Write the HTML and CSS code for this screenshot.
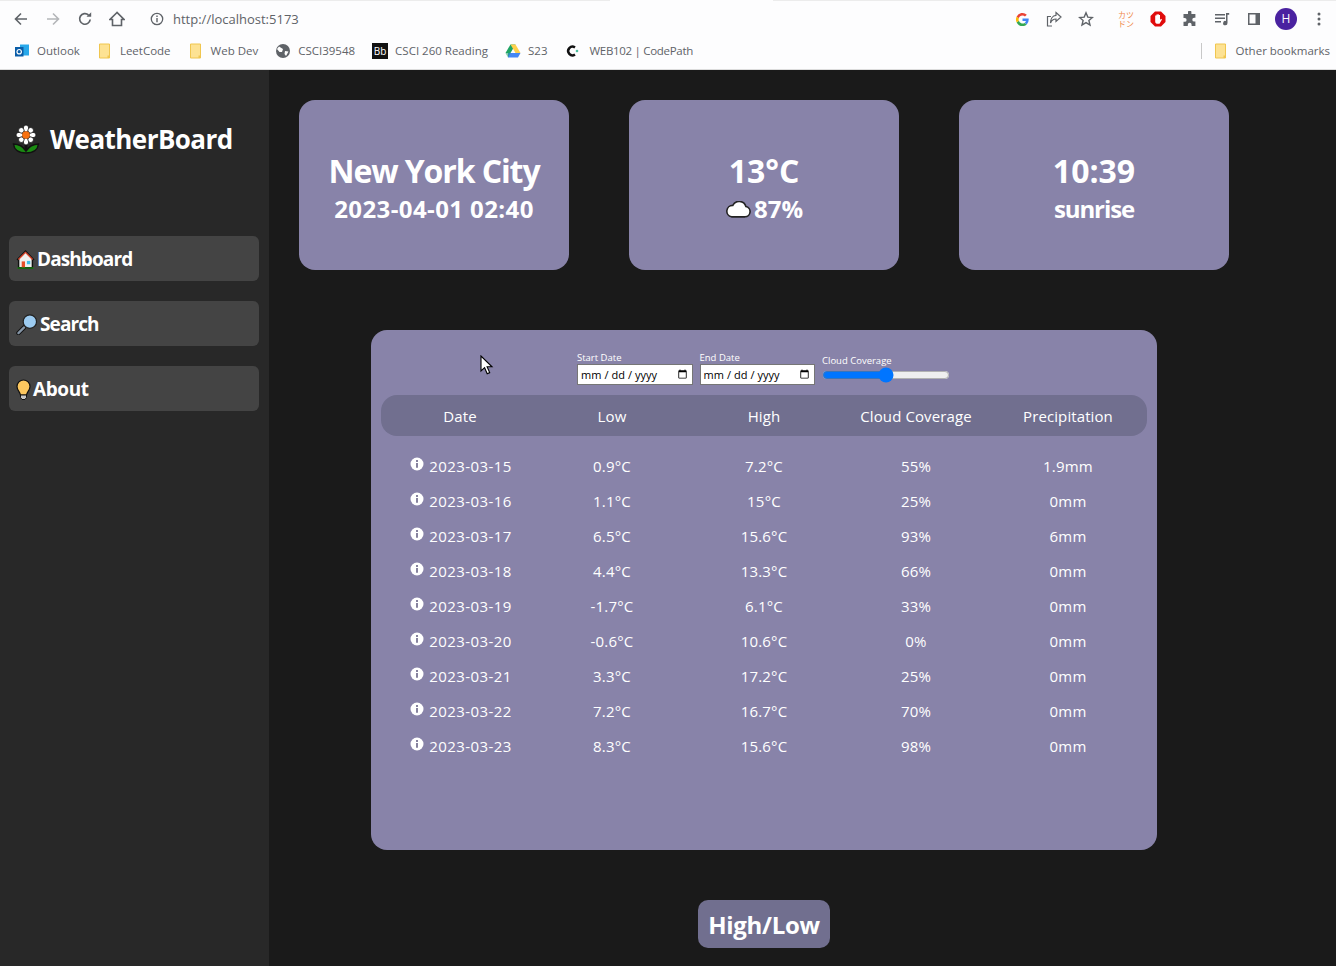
FILE: index.html
```html
<!DOCTYPE html>
<html lang="en">
<head>
  <meta charset="UTF-8">
  <meta name="viewport" content="width=device-width, initial-scale=1.0">
  <title>WeatherBoard</title>
  <link rel="stylesheet" href="styles.css">
</head>
<body>
  <header class="browser">
    <div class="toolbar">
      <svg class="tool" viewBox="0 0 16 16"><path d="M14 8H3M8 2.500 2.500 8 8 13.500" fill="none" stroke="#5f6368" stroke-width="1.600"/></svg>
      <svg class="tool" viewBox="0 0 16 16"><path d="M2 8h11M8 2.500 13.500 8 8 13.500" fill="none" stroke="#b4b6b9" stroke-width="1.600"/></svg>
      <svg class="tool" viewBox="0 0 16 16"><path d="M13.200 8.500A5.300 5.300 0 1 1 11.500 4" fill="none" stroke="#5f6368" stroke-width="1.700"/><path d="M9.500 5.800h4.700V1.200z" fill="#5f6368"/></svg>
      <svg class="tool" viewBox="0 0 16 16"><path d="M8 1.500 1 8.500h2.500v6h9v-6H15z" fill="none" stroke="#5f6368" stroke-width="1.600"/></svg>
      <svg class="tool-info" viewBox="0 0 14 14"><circle cx="7" cy="7" r="5.700" fill="none" stroke="#5f6368" stroke-width="1.300"/><path d="M6.300 6h1.400v4.200H6.300zM6.300 3.600h1.400V5H6.300z" fill="#5f6368"/></svg>
      <span class="url">http://localhost:5173</span>
      <div class="tool-right">
        <svg class="tool-g" viewBox="0 0 16 16"><path d="M14.600 8.200c0-.5 0-1-.1-1.400H8v2.700h3.700a3.200 3.200 0 0 1-1.400 2l2.200 1.700a6.600 6.600 0 0 0 2.100-5z" fill="#4285f4"/><path d="M8 15c1.800 0 3.300-.6 4.500-1.700l-2.200-1.700a4.100 4.100 0 0 1-6.200-2.200L1.800 11.100A6.800 6.800 0 0 0 8 15z" fill="#34a853"/><path d="M4.100 9.400a4.100 4.100 0 0 1 0-2.700L1.800 4.900a6.800 6.800 0 0 0 0 6.200z" fill="#fbbc05"/><path d="M8 3.700c1 0 1.900.4 2.600 1L12.600 2.800A6.800 6.800 0 0 0 1.800 4.900l2.300 1.800A4.100 4.100 0 0 1 8 3.700z" fill="#ea4335"/></svg>
        <svg class="tool-s" viewBox="0 0 16 16"><path d="M6 15H1.500V5.500H5M10 1.500 15 6l-5 4.500V8C7 8 5.500 9.500 4.500 12 4.500 8 6.500 4.500 10 4.300z" fill="none" stroke="#5f6368" stroke-width="1.200"/></svg>
        <svg class="tool-s" viewBox="0 0 16 16"><path d="m8 1.800 1.800 4.300 4.600.4-3.500 3 1.100 4.500L8 11.600 4 14l1.100-4.500-3.500-3 4.600-.4z" fill="none" stroke="#5f6368" stroke-width="1.400"/></svg>
        <span class="katakana">カツ<br>ドン</span>
        <svg class="tool-s" viewBox="0 0 16 16"><path d="M5 .5h6L15.500 5v6L11 15.500H5L.5 11V5z" fill="#e00b0b"/><path d="M5.200 8V4.500h1.200V7.500V3.500h1.200v4V3.200h1.200v4.300V4h1.200v5l1-1.200 1 .6L9.500 12.800H7C5.700 12.800 5.200 11.500 5.200 10.500z" fill="#fff"/></svg>
        <svg class="tool-s" viewBox="0 0 16 16"><path d="M6 1.200a1.700 1.700 0 0 1 3.400 0V3h4v3.800h-1.200a1.900 1.900 0 0 0 0 3.800h1.200V15H9.600v-1.300a1.900 1.900 0 0 0-3.800 0V15H1.500v-4.200h1.200a1.900 1.900 0 0 0 0-3.800H1.500V3H6z" fill="#5f6368"/></svg>
        <svg class="tool-s" viewBox="0 0 16 16"><path d="M1 3h10v1.400H1zM1 6.500h10v1.400H1zM1 10h6v1.400H1zM12 2h3.200v1.800h-1.700V12a2.200 2.200 0 1 1-1.500-2z" fill="#5f6368"/></svg>
        <svg class="tool-s" viewBox="0 0 16 16"><path d="M2 2h12v12H2zM3.500 3.500v9h6v-9z" fill="#5f6368" fill-rule="evenodd"/></svg>
        <span class="avatar">H</span>
        <svg class="tool-dots" viewBox="0 0 4 16"><circle cx="2" cy="3" r="1.500" fill="#5f6368"/><circle cx="2" cy="8" r="1.500" fill="#5f6368"/><circle cx="2" cy="13" r="1.500" fill="#5f6368"/></svg>
      </div>
    </div>
    <div class="bookmarks">
      <a class="bm"><svg viewBox="0 0 16 16"><path d="M6 1.500h9v11H6z" fill="#28a8ea"/><path d="M1 4h8.500v9.500H1z" fill="#0a5da8"/><circle cx="5.200" cy="8.700" r="2.200" fill="none" stroke="#fff" stroke-width="1.200"/></svg>Outlook</a>
      <a class="bm"><svg viewBox="0 0 16 16"><use href="#folder"/></svg>LeetCode</a>
      <a class="bm"><svg viewBox="0 0 16 16"><use href="#folder"/></svg>Web Dev</a>
      <a class="bm"><svg viewBox="0 0 16 16"><circle cx="8" cy="8" r="7" fill="#5f6368"/><path d="M4 3.500 8 6 7 9 4.500 9 2 6zM10 8l3.500.5L11 13l-1.500-2z" fill="#fff"/></svg>CSCI39548</a>
      <a class="bm"><span class="bb-icon">Bb</span>CSCI 260 Reading</a>
      <a class="bm"><svg viewBox="0 0 16 16"><path d="M5.500 1.500h5L5.500 10H.5z" fill="#1fa463"/><path d="M10.500 1.500 15.500 10h-5L5.500 1.500z" fill="#ffd04b"/><path d="M3 10h12.500L13 14.500H3z" fill="#4688f4"/><path d="M3 14.500.5 10h5z" fill="#0f9d58" opacity=".5"/></svg>S23</a>
      <a class="bm bm-path"><svg viewBox="0 0 16 16"><path d="M11 4.500A4.300 4.300 0 1 0 11 11.500" fill="none" stroke="#111" stroke-width="2.400"/><circle cx="13" cy="8" r="1.300" fill="#4dbf9f"/></svg>WEB102 | CodePath</a>
      <div class="bm-other">
        <a class="bm"><svg viewBox="0 0 16 16"><use href="#folder"/></svg>Other bookmarks</a>
      </div>
    </div>
  </header>

  <svg class="defs" width="0" height="0"><defs><g id="folder"><path d="M2.500 1h10v14h-10z" fill="#fde293" stroke="#f0c64f"/><path d="M10.500 12.500h2v2.500h-2z" fill="#f0c64f"/></g></defs></svg>

  <div class="app">
    <aside class="sidebar">
      <div class="brand">
        <svg class="brand-flower" viewBox="0 0 28 30">
          <path d="M14 19v7" stroke="#111" stroke-width="3"/>
          <path d="M1.500 20c4 0 9 1.500 12.500 7 3.500-5.500 8.500-7 12.500-7-.5 5-4.500 9-12.500 9S2 25 1.500 20z" fill="#1a8a12" stroke="#111" stroke-width="1.500"/>
          <g fill="#fff" stroke="#111" stroke-width=".8">
            <ellipse cx="14" cy="4.500" rx="2.800" ry="3.500"/><ellipse cx="14" cy="17.500" rx="2.800" ry="3.500"/>
            <ellipse cx="7.500" cy="11" rx="3.500" ry="2.800"/><ellipse cx="20.500" cy="11" rx="3.500" ry="2.800"/>
            <ellipse cx="9.300" cy="6.300" rx="2.800" ry="2.800"/><ellipse cx="18.700" cy="6.300" rx="2.800" ry="2.800"/>
            <ellipse cx="9.300" cy="15.700" rx="2.800" ry="2.800"/><ellipse cx="18.700" cy="15.700" rx="2.800" ry="2.800"/>
          </g>
          <circle cx="14" cy="11" r="3.800" fill="#f7700f"/>
        </svg>
        <h1>WeatherBoard</h1>
      </div>
      <nav class="nav">
        <a class="nav-btn">
          <svg class="nav-icon nav-icon-home" viewBox="0 0 20 21"><path d="M10 .5 .5 10.500l1.500 1V20.500h16V11.500l1.500-1z" fill="#111"/><path d="M10 2.500 3.500 9.500V18.500h13V9.500z" fill="#f0f0ee"/><path d="M2.500 10.500 10 3l7.500 7.500" fill="none" stroke="#d9442a" stroke-width="1.400"/><path d="M6 12.500h3.500v6.500H6z" fill="#e8502a"/><path d="M11.500 12h3.500v3.500h-3.500z" fill="#3fc0e8"/><path d="M1.500 18.800h17v1.400h-17z" fill="#1a8a12"/></svg>
          Dashboard
        </a>
        <a class="nav-btn">
          <svg class="nav-icon nav-icon-wide" viewBox="0 0 22 22"><path d="m8 14-6 6" stroke="#111" stroke-width="4.500" stroke-linecap="round"/><path d="m8 14-6 6" stroke="#8494a5" stroke-width="2.400" stroke-linecap="round"/><circle cx="14" cy="8" r="7" fill="#9ccbf0" stroke="#222" stroke-width="1.300"/></svg>
          Search
        </a>
        <a class="nav-btn nav-about">
          <svg class="nav-icon nav-icon-thin" viewBox="0 0 15 21"><path d="M7.500 1A6.500 6.500 0 0 0 1 7.500C1 11 4 13 4.500 16h6C11 13 14 11 14 7.500A6.500 6.500 0 0 0 7.500 1z" fill="#fcc75f" stroke="#111" stroke-width="1.200"/><path d="M4.500 16h6v2.500l-1.500 2H6l-1.500-2z" fill="#c6c6c6" stroke="#111"/></svg>
          About
        </a>
      </nav>
    </aside>

    <main class="content">
      <section class="cards">
        <div class="card">
          <h2 class="tight">New York City</h2>
          <p class="wide">2023-04-01 02:40</p>
        </div>
        <div class="card">
          <h2>13°C</h2>
          <p class="card-cloud"><svg class="cloud" viewBox="1 1 24 15.500"><path d="M7 15.500h12.500a4.800 4.800 0 0 0 .8-9.500A6.500 6.500 0 0 0 8.200 5 5.300 5.300 0 0 0 7 15.500z" fill="#fff" stroke="#222" stroke-width="1.500"/></svg>87%</p>
        </div>
        <div class="card">
          <h2>10:39</h2>
          <p class="tight">sunrise</p>
        </div>
      </section>

      <section class="panel">
        <div class="filters">
          <label class="field">Start Date<input type="date"></label>
          <label class="field">End Date<input type="date"></label>
          <label class="field field-range">Cloud Coverage<input type="range" min="0" max="100" value="50"></label>
        </div>
        <div class="table-head">
          <span>Date</span><span>Low</span><span>High</span><span>Cloud Coverage</span><span>Precipitation</span>
        </div>
        <div class="rows">
          <div class="row"><span class="date"><svg class="info" viewBox="0 0 14 14"><use href="#info"/></svg>2023-03-15</span><span>0.9°C</span><span>7.2°C</span><span>55%</span><span>1.9mm</span></div>
          <div class="row"><span class="date"><svg class="info" viewBox="0 0 14 14"><use href="#info"/></svg>2023-03-16</span><span>1.1°C</span><span>15°C</span><span>25%</span><span>0mm</span></div>
          <div class="row"><span class="date"><svg class="info" viewBox="0 0 14 14"><use href="#info"/></svg>2023-03-17</span><span>6.5°C</span><span>15.6°C</span><span>93%</span><span>6mm</span></div>
          <div class="row"><span class="date"><svg class="info" viewBox="0 0 14 14"><use href="#info"/></svg>2023-03-18</span><span>4.4°C</span><span>13.3°C</span><span>66%</span><span>0mm</span></div>
          <div class="row"><span class="date"><svg class="info" viewBox="0 0 14 14"><use href="#info"/></svg>2023-03-19</span><span>-1.7°C</span><span>6.1°C</span><span>33%</span><span>0mm</span></div>
          <div class="row"><span class="date"><svg class="info" viewBox="0 0 14 14"><use href="#info"/></svg>2023-03-20</span><span>-0.6°C</span><span>10.6°C</span><span>0%</span><span>0mm</span></div>
          <div class="row"><span class="date"><svg class="info" viewBox="0 0 14 14"><use href="#info"/></svg>2023-03-21</span><span>3.3°C</span><span>17.2°C</span><span>25%</span><span>0mm</span></div>
          <div class="row"><span class="date"><svg class="info" viewBox="0 0 14 14"><use href="#info"/></svg>2023-03-22</span><span>7.2°C</span><span>16.7°C</span><span>70%</span><span>0mm</span></div>
          <div class="row"><span class="date"><svg class="info" viewBox="0 0 14 14"><use href="#info"/></svg>2023-03-23</span><span>8.3°C</span><span>15.6°C</span><span>98%</span><span>0mm</span></div>
        </div>
        <svg class="cursor" viewBox="0 0 14 20"><path d="M1 1v15l3.600-3.300 2.600 6 2.500-1.100-2.600-5.800H12z" fill="#fff" stroke="#000" stroke-width="1.100"/></svg>
      </section>

      <button class="toggle">High/Low</button>
    </main>
  </div>

  <svg class="defs" width="0" height="0"><defs><g id="info"><circle cx="7" cy="7" r="6.500" fill="#fff"/><path d="M6 6h2v4.800H6zM6 3h2v2H6z" fill="#87839f"/></g></defs></svg>
</body>
</html>
```

FILE: styles.css
```css
* {
  box-sizing: border-box;
}
html, body {
  margin: 0;
  height: 966px;
  overflow: hidden;
}
body {
  font-family: "Open Sans", "Noto Sans", sans-serif;
  background-color: #1a1a1a;
  color: #fff;
}
.defs {
  position: absolute;
}

/* browser chrome */
.browser {
  height: 70px;
  background:
    linear-gradient(#ececec, #ececec) 0 0 / 610px 1px no-repeat,
    linear-gradient(#ececec, #ececec) 100% 0 / 563px 1px no-repeat,
    #fdfdfe;
  border-bottom: 1px solid #dcdcdc;
  color: #5f6368;
  font-size: 11.5px;
}
.toolbar {
  height: 38px;
  display: flex;
  align-items: center;
  padding-left: 13px;
}
.tool {
  width: 16px;
  height: 16px;
  margin-right: 16px;
  flex: none;
}
.tool-info {
  width: 14px;
  height: 14px;
  margin: 0 9px 0 9px;
}
.url {
  font-size: 13px;
}
.tool-right {
  margin-left: auto;
  display: flex;
  align-items: center;
  padding-right: 15px;
}
.tool-g {
  width: 15px;
  height: 15px;
  margin-right: 16px;
}
.tool-s {
  width: 16px;
  height: 16px;
  margin-right: 16px;
}
.katakana {
  width: 16px;
  margin-right: 16px;
  margin-left: 8px;
  font-size: 8px;
  line-height: 9px;
  color: #f08a4b;
  font-family: "Noto Sans CJK JP", sans-serif;
}
.avatar {
  width: 22px;
  height: 22px;
  margin: 0 20px 0 -3px;
  border-radius: 50%;
  background-color: #4a22a0;
  color: #fff;
  font-size: 12px;
  line-height: 22px;
  text-align: center;
}
.tool-dots {
  width: 4px;
  height: 16px;
}
.bookmarks {
  height: 25px;
  display: flex;
  align-items: center;
  padding-left: 14px;
}
.bm {
  display: flex;
  align-items: center;
  gap: 7px;
  white-space: nowrap;
  margin-right: 17px;
}
.bm-path {
  gap: 9px;
  letter-spacing: -0.3px;
}
.bm svg {
  width: 16px;
  height: 16px;
}
.bm-other {
  margin-left: auto;
  border-left: 1px solid #c8c8c8;
  padding-left: 11px;
  height: 16px;
  display: flex;
  align-items: center;
}
.bm-other .bm {
  margin-right: 6px;
}
.bb-icon {
  width: 16px;
  height: 16px;
  background-color: #111;
  color: #fff;
  font-size: 10px;
  line-height: 16px;
  text-align: center;
}

/* app */
.app {
  display: flex;
  height: 896px;
}
.sidebar {
  width: 269px;
  flex: none;
  background-color: #282828;
  padding: 0 10px 0 9px;
}
.brand {
  display: flex;
  align-items: center;
  gap: 10px;
  height: 56px;
  margin-top: 41px;
  padding-left: 3px;
}
.brand-flower {
  width: 28px;
  height: 30px;
}
.brand h1 {
  margin: 0;
  font-size: 26px;
  letter-spacing: -0.55px;
  font-weight: 700;
}
.nav {
  margin-top: 69px;
  display: flex;
  flex-direction: column;
  gap: 20px;
}
.nav-btn {
  height: 45px;
  background-color: #444;
  border-radius: 6px;
  display: flex;
  align-items: center;
  gap: 2px;
  padding: 1px 0 0 7px;
  font-size: 19px;
  letter-spacing: -0.9px;
  font-weight: 700;
}
.nav-about {
  letter-spacing: -0.4px;
}
.nav-icon {
  width: 20px;
  height: 21px;
  flex: none;
}
.nav-icon-home {
  width: 19px;
}
.nav-icon-wide {
  width: 22px;
}
.nav-icon-thin {
  width: 15px;
}

.content {
  flex: 1;
  padding: 30px 0 0 30px;
  display: flex;
  flex-direction: column;
}
.cards {
  display: flex;
  gap: 60px;
}
.card {
  width: 270px;
  height: 170px;
  padding-top: 4px;
  background-color: #8883a9;
  border-radius: 16px;
  display: flex;
  flex-direction: column;
  align-items: center;
  justify-content: center;
  font-weight: 700;
}
.card h2 {
  margin: 0;
  font-size: 32px;
  line-height: 44px;
}
.card p {
  margin: 0;
  font-size: 24px;
  line-height: 32px;
}
.card .tight {
  letter-spacing: -1.1px;
}
.card .wide {
  letter-spacing: 0.4px;
}
.card-cloud {
  display: flex;
  align-items: center;
  gap: 3px;
}
.cloud {
  width: 26px;
  height: 17px;
}

.panel {
  position: relative;
  width: 786px;
  height: 520px;
  margin: 60px 0 0 72px;
  padding: 0 10px;
  background-color: #8883a9;
  border-radius: 16px;
}
.filters {
  height: 65px;
  display: flex;
  align-items: flex-end;
  gap: 7px;
  padding: 0 0 10px 196px;
}
.field {
  display: flex;
  flex-direction: column;
  font-size: 9.5px;
  line-height: 12px;
}
.field input[type="date"] {
  width: 115.5px;
  height: 21px;
  margin: 0;
  padding: 1px 2px;
  border: 1px solid #767676;
  background-color: #fff;
  font-family: "Open Sans", sans-serif;
  font-size: 11px;
}
.field input::-webkit-datetime-edit-text {
  padding: 0 2px;
}
.field input[type="range"] {
  width: 128px;
  height: 16px;
  margin: 0;
}
.field-range {
  padding-bottom: 2px;
}
.table-head {
  height: 41px;
  border-radius: 16px;
  background-color: #716f8f;
  display: grid;
  grid-template-columns: repeat(5, 152px);
  padding-left: 3px;
  align-items: center;
  text-align: center;
  font-size: 15px;
  letter-spacing: 0.1px;
}
.rows {
  margin-top: 12px;
}
.row {
  height: 35px;
  display: grid;
  grid-template-columns: repeat(5, 152px);
  padding-left: 3px;
  align-items: center;
  text-align: center;
  font-size: 15px;
  letter-spacing: 0.2px;
}
.date {
  display: flex;
  justify-content: center;
  align-items: center;
  gap: 5px;
  padding-left: 2px;
  letter-spacing: 0.4px;
}
.info {
  width: 14px;
  height: 14px;
  margin-top: -3px;
}
.cursor {
  position: absolute;
  left: 109px;
  top: 25px;
  width: 14px;
  height: 20px;
}

.toggle {
  align-self: flex-start;
  margin: 50px 0 0 399px;
  width: 132px;
  height: 48px;
  border: none;
  border-radius: 10px;
  background-color: #716f8f;
  color: #fff;
  font-family: inherit;
  font-size: 24px;
  letter-spacing: -0.3px;
  font-weight: 700;
  padding: 0;
}
```
